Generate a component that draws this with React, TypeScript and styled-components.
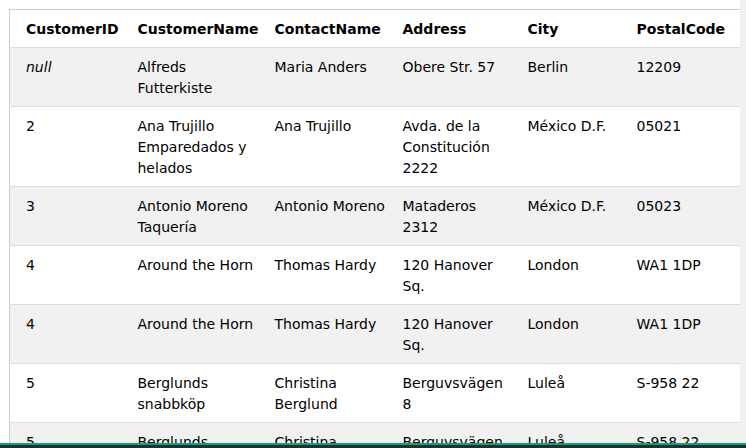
import styled, { createGlobalStyle } from "styled-components";

const GlobalStyle = createGlobalStyle`
  html, body {
    margin: 0;
    height: 100%;
    overflow: hidden;
    background: #ffffff;
  }
  #root {
    height: 100%;
  }
`;

const Page = styled.div`
  display: flex;
  height: 100%;
  font-family: "DejaVu Sans", Verdana, sans-serif;
  font-size: 14px;
  line-height: 21px;
  color: #000;
`;

const Content = styled.div`
  flex: 1;
  min-width: 0;
  overflow: hidden;
  padding: 9px 0 0 9px;
`;

const ScrollTrack = styled.div`
  width: 6px;
  flex-shrink: 0;
  background: #f1f1f1;
`;

const Table = styled.table`
  border-collapse: collapse;
  border-spacing: 0;
  table-layout: fixed;
  width: 733px;
  border: 1px solid #ccc;
`;

const Row = styled.tr<{ $striped?: boolean }>`
  background: ${(p) => (p.$striped ? "#f1f1f1" : "#ffffff")};
  border-bottom: 1px solid #ddd;
`;

const HeadCell = styled.th`
  text-align: left;
  vertical-align: top;
  font-weight: bold;
  padding: 9px 8px 7px;
  &:first-child {
    padding-left: 16px;
  }
`;

const Cell = styled.td`
  vertical-align: top;
  padding: 9px 8px 7px;
  &:first-child {
    padding-left: 16px;
  }
`;

const Null = styled.i`
  font-style: italic;
`;

const BottomBar = styled.div`
  position: fixed;
  left: 0;
  right: 0;
  bottom: 0;
  height: 3px;
  background: #282a35;
  border-top: 2px solid #04aa6d;
`;

type Customer = {
  id: number | null;
  name: string;
  contact: string;
  address: string;
  city: string;
  postal: string;
};

const customers: Customer[] = [
  { id: null, name: "Alfreds Futterkiste", contact: "Maria Anders", address: "Obere Str. 57", city: "Berlin", postal: "12209" },
  { id: 2, name: "Ana Trujillo Emparedados y helados", contact: "Ana Trujillo", address: "Avda. de la Constitución 2222", city: "México D.F.", postal: "05021" },
  { id: 3, name: "Antonio Moreno Taquería", contact: "Antonio Moreno", address: "Mataderos 2312", city: "México D.F.", postal: "05023" },
  { id: 4, name: "Around the Horn", contact: "Thomas Hardy", address: "120 Hanover Sq.", city: "London", postal: "WA1 1DP" },
  { id: 4, name: "Around the Horn", contact: "Thomas Hardy", address: "120 Hanover Sq.", city: "London", postal: "WA1 1DP" },
  { id: 5, name: "Berglunds snabbköp", contact: "Christina Berglund", address: "Berguvsvägen 8", city: "Luleå", postal: "S-958 22" },
  { id: 5, name: "Berglunds snabbköp", contact: "Christina Berglund", address: "Berguvsvägen 8", city: "Luleå", postal: "S-958 22" },
];

const columns = [
  { label: "CustomerID", width: 120 },
  { label: "CustomerName", width: 137 },
  { label: "ContactName", width: 128 },
  { label: "Address", width: 125 },
  { label: "City", width: 109 },
  { label: "PostalCode", width: 114 },
];

export default function App() {
  return (
    <>
      <GlobalStyle />
      <Page>
        <Content>
          <Table>
            <colgroup>
              {columns.map((c) => (
                <col key={c.label} style={{ width: c.width }} />
              ))}
            </colgroup>
            <thead>
              <Row>
                {columns.map((c) => (
                  <HeadCell key={c.label}>{c.label}</HeadCell>
                ))}
              </Row>
            </thead>
            <tbody>
              {customers.map((c, i) => (
                <Row key={i} $striped={i % 2 === 0}>
                  <Cell>{c.id === null ? <Null>null</Null> : c.id}</Cell>
                  <Cell>{c.name}</Cell>
                  <Cell>{c.contact}</Cell>
                  <Cell>{c.address}</Cell>
                  <Cell>{c.city}</Cell>
                  <Cell>{c.postal}</Cell>
                </Row>
              ))}
            </tbody>
          </Table>
        </Content>
        <ScrollTrack />
      </Page>
      <BottomBar />
    </>
  );
}
